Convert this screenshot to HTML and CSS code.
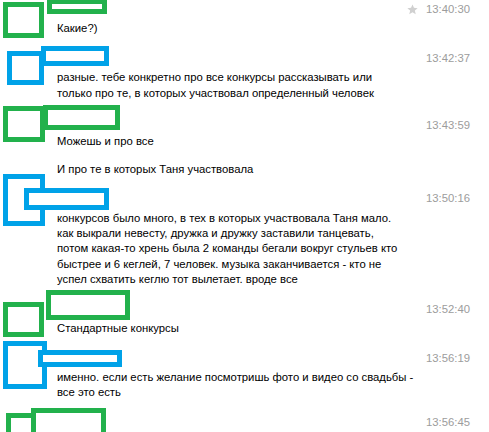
FILE: index.html
```html
<!DOCTYPE html>
<html lang="ru">
<head>
  <meta charset="UTF-8">
  <title>Диалог</title>
  <link rel="stylesheet" href="styles.css">
</head>
<body>

  <div class="chat">

    <div class="msg">
      <div class="msg-head">
        <span class="msg-name"></span>
        <span class="msg-meta">
          <svg class="star" viewBox="0 0 12 12" width="11" height="11"><path d="M6 0.5 L7.6 4.2 L11.6 4.5 L8.6 7.1 L9.5 11.1 L6 9 L2.5 11.1 L3.4 7.1 L0.4 4.5 L4.4 4.2 Z"/></svg>
          <span class="msg-time">13:40:30</span>
        </span>
      </div>
      <div class="msg-text">Какие?)</div>
    </div>

    <div class="msg">
      <div class="msg-head">
        <span class="msg-name"></span>
        <span class="msg-meta"><span class="msg-time">13:42:37</span></span>
      </div>
      <div class="msg-text">разные. тебе конкретно про все конкурсы рассказывать или<br>только про те, в которых участвовал определенный человек</div>
    </div>

    <div class="msg msg-short">
      <div class="msg-head">
        <span class="msg-name"></span>
        <span class="msg-meta"><span class="msg-time">13:43:59</span></span>
      </div>
      <div class="msg-text">Можешь и про все</div>
    </div>

    <div class="msg msg-cont">
      <div class="msg-text">И про те в которых Таня участвовала</div>
    </div>

    <div class="msg">
      <div class="msg-head">
        <span class="msg-name"></span>
        <span class="msg-meta"><span class="msg-time">13:50:16</span></span>
      </div>
      <div class="msg-text">конкурсов было много, в тех в которых участвовала Таня мало.<br>как выкрали невесту, дружка и дружку заставили танцевать,<br>потом какая-то хрень была 2 команды бегали вокруг стульев кто<br>быстрее и 6 кеглей, 7 человек. музыка заканчивается - кто не<br>успел схватить кеглю тот вылетает. вроде все</div>
    </div>

    <div class="msg">
      <div class="msg-head">
        <span class="msg-name"></span>
        <span class="msg-meta"><span class="msg-time">13:52:40</span></span>
      </div>
      <div class="msg-text">Стандартные конкурсы</div>
    </div>

    <div class="msg">
      <div class="msg-head">
        <span class="msg-name"></span>
        <span class="msg-meta"><span class="msg-time">13:56:19</span></span>
      </div>
      <div class="msg-text">именно. если есть желание посмотришь фото и видео со свадьбы -<br>все это есть</div>
    </div>

    <div class="msg">
      <div class="msg-head">
        <span class="msg-name"></span>
        <span class="msg-meta"><span class="msg-time">13:56:45</span></span>
      </div>
      <div class="msg-text">&nbsp;</div>
    </div>

    <!-- закрашенные аватарки и имена -->
    <span class="mark green m1"></span>
    <span class="mark green m2"></span>
    <span class="mark blue m3"></span>
    <span class="mark blue m4"></span>
    <span class="mark green m5"></span>
    <span class="mark green m6"></span>
    <span class="mark blue m7"></span>
    <span class="mark blue m8"></span>
    <span class="mark green m9"></span>
    <span class="mark green m10"></span>
    <span class="mark blue m11"></span>
    <span class="mark blue m12"></span>
    <span class="mark green m13"></span>
    <span class="mark green m14"></span>
  </div>

</body>
</html>
```

FILE: styles.css
```css
/* окно переписки */
body {
  margin: 0;
  background: #fff;
  font-family: 'Liberation Sans', Arial, sans-serif;
  font-size: 11.3px;
  line-height: 15.4px;
  color: #000;
  overflow: hidden;
}

.chat {
  position: relative;
  margin-top: -5px;
  padding: 0 19px 0 7px;
}

.msg {
  display: flex;
  flex-direction: column;
  padding: 7px 0 7px 50px;
}

.msg-head {
  display: flex;
  justify-content: space-between;
  margin-bottom: 4px;
}

.msg-meta {
  display: flex;
  align-items: center;
  gap: 8px;
}

.star {
  fill: #d0d0d0;
}

.msg-time {
  color: #9c9c9c;
}

.msg-short {
  padding-top: 10px;
}

.msg-short .msg-head {
  margin-bottom: 1px;
}

.msg-cont {
  padding-top: 5px;
}

.msg-text {
  white-space: nowrap;
}

/* рамки поверх аватарок */
.mark {
  position: absolute;
  box-sizing: border-box;
  border: 5px solid;
  background: #fff;
}

.green { border-color: #22b14c; }
.blue { border-color: #00a2e8; }

.m1 { left: 3px; top: 7px; width: 41px; height: 36px; }
.m2 { left: 47px; top: 4px; width: 60px; height: 15px; }
.m3 { left: 7px; top: 56px; width: 37px; height: 34px; }
.m4 { left: 41px; top: 51px; width: 68px; height: 20px; }
.m5 { left: 3px; top: 111px; width: 42px; height: 36px; }
.m6 { left: 43px; top: 110px; width: 77px; height: 25px; }
.m7 { left: 3px; top: 179px; width: 42px; height: 52px; }
.m8 { left: 24px; top: 193px; width: 85px; height: 22px; }
.m9 { left: 3px; top: 307px; width: 41px; height: 35px; }
.m10 { left: 46px; top: 295px; width: 84px; height: 30px; }
.m11 { left: 3px; top: 346px; width: 44px; height: 48px; }
.m12 { left: 38px; top: 355px; width: 84px; height: 17px; }
.m13 { left: 6px; top: 418px; width: 30px; height: 40px; }
.m14 { left: 31px; top: 413px; width: 75px; height: 40px; }
```
